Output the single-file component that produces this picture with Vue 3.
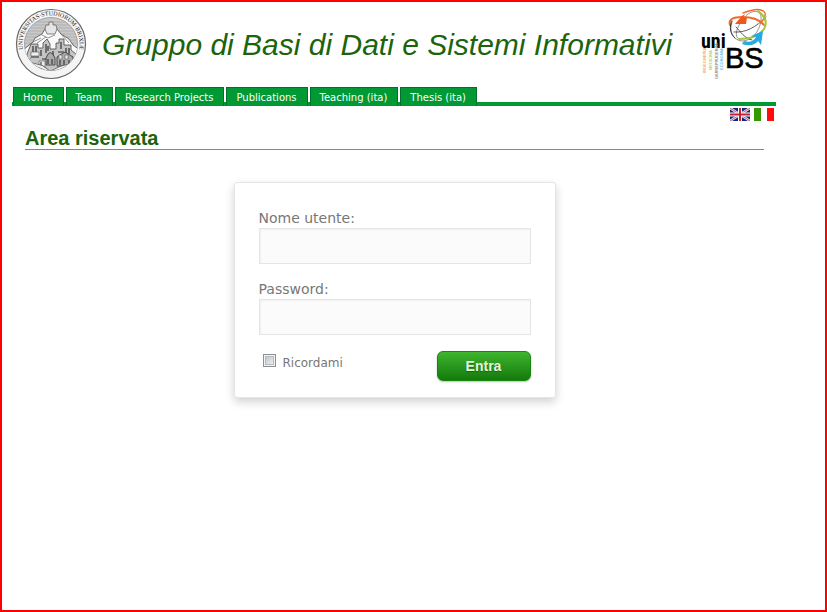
<script setup>
import { ref } from 'vue'

const tabs = ['Home', 'Team', 'Research Projects', 'Publications', 'Teaching (ita)', 'Thesis (ita)']
const username = ref('')
const password = ref('')
const remember = ref(false)
</script>

<template>
  <div class="page">
    <header class="banner">
      <svg class="seal" viewBox="0 0 72 72" role="img" aria-label="Universitas Studiorum Brixiae">
        <defs>
          <path id="seal-arc" d="M14 54A28.500 28.500 0 1 1 58 54" />
          <clipPath id="seal-inner"><circle cx="36" cy="36" r="26.500" /></clipPath>
        </defs>
        <circle cx="36" cy="36" r="34.500" fill="#f4f4f4" stroke="#666" stroke-width="1.200" />
        <circle cx="36" cy="36" r="26.500" fill="#c9c9c9" stroke="#888" stroke-width=".7" />
        <g clip-path="url(#seal-inner)">
          <path d="M8 14H64M8 17H64M8 20H64M8 23H64M8 26H64M8 29H64M8 32H64M8 35H64" stroke="#aaa" stroke-width=".8" />
          <path d="M6 44L14 37L18 34L20 30L27 26L30 21H42L46 26L54 31L58 37L66 43V50H6Z" fill="#fafafa" stroke="#666" />
          <path d="M30 21L31 17H34V14H38V17H41L42 21L40 26H32Z" fill="#e5e5e5" stroke="#666" stroke-width=".8" />
          <path d="M18 34L26 30M22 35L31 29M46 26L54 35M27 27L33 30L40 27" fill="none" stroke="#777" stroke-width=".8" />
          <path d="M12 46L16 36H23V40H28V35L32 31L35 36V41H41V35H44V31H49V37H56V42L61 46L58 58L36 66L12 56Z" fill="#c4c4c4" stroke="#444" stroke-width=".8" />
          <path d="M18 38v7M21 38v7M26 42v6M31 36v9M33 38v5M38 43v5M46 34v7M51 40v7M54 40v6M16 49h8M27 51h6M43 44h6M52 49h6" stroke="#333" stroke-width="1.200" />
          <path d="M31 50Q35 39 40 50V57H31ZM42 49l8-5 8 5v9H42Z" fill="#aaa" stroke="#333" stroke-width=".8" />
          <path d="M24 53h6v6h-6zM16 44h8v4h-8zM44 47h3v4h-3zM50 47h3v4h-3z" fill="#eee" stroke="#555" stroke-width=".6" />
          <path d="M33 51v5M37 51v5M45 52v5M49 52v5M54 52v5M26 54v4" stroke="#222" />
          <path d="M14 49L12 55L27 59L35 65L45 60L59 56L62 48" fill="none" stroke="#555" stroke-width="3.600" />
          <path d="M14 49L12 55L27 59L35 65L45 60L59 56L62 48" fill="none" stroke="#eee" stroke-width="2.400" />
        </g>
        <text class="seal-text"><textPath href="#seal-arc" startOffset="50%" text-anchor="middle">UNIVERSITAS·STUDIORUM·BRIXIÆ</textPath></text>
      </svg>
      <h1 class="title">Gruppo di Basi di Dati e Sistemi Informativi</h1>
      <svg class="unibs" viewBox="0 0 68 72" role="img" aria-label="uniBS">
        <g fill="none" stroke-linecap="round">
          <path d="M31 14C28 23 31 32 41 33C53 33 61 19 60 8C58 1 49 2 42 11C35 20 33 29 38 31" stroke="#777" stroke-width=".8" />
          <path d="M33 24C45 25 55 19 65 9M35 19C40 24 43 30 51 32" stroke="#333" stroke-width=".8" />
          <path d="M29 17C27 11 33 9 41 9C51 9 59 12 63 17" stroke="#f26b2b" stroke-width="2" />
          <path d="M42 5C52 1 61 0 64 5C65 8 63 11 60 15" stroke="#f26b2b" stroke-width="1.400" />
          <path d="M57 3C64 8 67 14 63 21C58 28 48 31 38 31" stroke="#a5c838" stroke-width="2" />
          <path d="M31 13C28 18 29 26 34 30" stroke="#333" />
        </g>
        <path d="M34 16L41 8L44 6L42 10L46 9L45 16Z" fill="#f0561e" />
        <path d="M43 33C49 35 53 33 55 29L50 28L62 23L60 37L57 33C53 38 47 38 41 36Z" fill="#27a9e1" />
        <text x="0" y="40" class="uni">uni</text>
        <text x="24" y="60" class="bs">BS</text>
        <g class="faculties">
          <text transform="translate(5 65) rotate(-90)" fill="#f2a673">INGEGNERIA</text>
          <text transform="translate(11 62) rotate(-90)" fill="#b9cf60">MEDICINA</text>
          <text transform="translate(17 71) rotate(-90)" fill="#888">GIURISPRUDENZA</text>
          <text transform="translate(22 62) rotate(-90)" fill="#65bfe5">ECONOMIA</text>
        </g>
      </svg>
    </header>

    <nav class="tabs" aria-label="Menu">
      <a v-for="tab in tabs" :key="tab" href="#" class="tab">{{ tab }}</a>
    </nav>

    <div class="languages">
      <a href="#" aria-label="English">
        <svg class="flag" viewBox="0 0 20 13">
          <path d="M0 0H20V13H0Z" fill="#14267c" />
          <path d="M0 0L20 13M20 0L0 13" stroke="#dfe6f5" stroke-width="2.400" />
          <path d="M0 0L20 13M20 0L0 13" stroke="#d33a4a" stroke-width=".8" />
          <path d="M10 0V13M0 6.500H20" stroke="#fff" stroke-width="4" />
          <path d="M10 0V13M0 6.500H20" stroke="#c8202f" stroke-width="2" />
        </svg>
      </a>
      <a href="#" aria-label="Italiano">
        <svg class="flag" viewBox="0 0 20 13">
          <path d="M0 0H20V13H0Z" fill="#fff" />
          <path d="M0 0H7V13H0Z" fill="#339900" />
          <path d="M13 0H20V13H13Z" fill="#ff0c0c" />
        </svg>
      </a>
    </div>

    <main class="content">
      <h2 class="heading">Area riservata</h2>
      <form class="card" @submit.prevent>
        <label class="label" for="username">Nome utente:</label>
        <input id="username" v-model="username" class="field" type="text" />
        <label class="label" for="password">Password:</label>
        <input id="password" v-model="password" class="field" type="password" />
        <div class="actions">
          <div class="remember">
            <input id="remember" v-model="remember" class="check" type="checkbox" />
            <label for="remember">Ricordami</label>
          </div>
          <button class="submit" type="submit">Entra</button>
        </div>
      </form>
    </main>
  </div>
</template>

<style>
body {
  background: #fff;
}
</style>

<style scoped>
.page {
  box-sizing: border-box;
  min-height: 100vh;
  padding: 6px 49px 24px 10px;
  border: 2px solid #f00;
  font-family: Verdana, "DejaVu Sans", sans-serif;
}
.banner {
  display: flex;
  align-items: center;
  height: 72px;
  padding: 0 7px 0 3px;
}
.seal {
  flex: none;
  width: 72px;
  height: 72px;
}
.seal-text {
  font: 400 6px "Liberation Serif", serif;
  fill: #222;
}
.title {
  flex: 1;
  margin: 0 0 0 15px;
  padding-top: 2px;
  color: #1c640c;
  font: italic 400 30px/38px "Liberation Sans", Arial, sans-serif;
  white-space: nowrap;
}
.unibs {
  flex: none;
  width: 68px;
  height: 72px;
}
.uni {
  font: 700 20px "Liberation Sans Narrow", "Roboto Condensed", "Open Sans Condensed", "Liberation Sans", sans-serif;
}
.bs {
  font: 400 29px "Liberation Sans", sans-serif;
  stroke: #000;
  stroke-width: .6px;
}
.faculties {
  font: 700 4px "Liberation Sans", sans-serif;
}
.tabs {
  display: flex;
  gap: 2px;
  margin-top: 7px;
  padding-left: 1px;
  background: linear-gradient(#093, #093) bottom / 100% 4px no-repeat;
}
.tab {
  box-sizing: border-box;
  height: 19px;
  padding: 0 10px 0 9px;
  border: 1px solid #00702a;
  border-bottom: 0;
  background: #093;
  color: #fff;
  font-size: 10px;
  line-height: 20px;
  text-decoration: none;
  white-space: nowrap;
}
.languages {
  display: flex;
  justify-content: flex-end;
  gap: 4px;
  padding: 2px 2px 0 0;
}
.flag {
  display: block;
  width: 20px;
  height: 13px;
}
.content {
  padding: 6px 12px 0 13px;
}
.heading {
  margin: 0 0 32px;
  border-bottom: 1px solid #ec6a17;
  color: #1c640c;
  font: 700 20px/22px "Liberation Sans", Arial, sans-serif;
}
.card {
  box-sizing: border-box;
  width: 322px;
  max-width: 100%;
  margin: 0 auto;
  padding: 25px 24px 16px;
  border: 1px solid #e5e5e5;
  border-radius: 3px;
  background: #fff;
  box-shadow: 0 4px 10px rgba(0, 0, 0, .18);
  color: #777;
}
.label {
  display: block;
  font-size: 14px;
  line-height: 20px;
}
.field {
  display: block;
  box-sizing: border-box;
  width: 100%;
  height: 36px;
  margin: 0 0 15px;
  padding: 3px 6px;
  border: 1px solid #e5e5e5;
  background: #fbfbfb;
  box-shadow: inset 1px 1px 2px rgba(200, 200, 200, .2);
  color: #555;
  font-size: 20px;
}
.actions {
  display: flex;
  align-items: flex-start;
  justify-content: space-between;
  padding-top: 1px;
}
.remember {
  display: flex;
  align-items: center;
  gap: 7px;
  padding-left: 4px;
  font-size: 12px;
  line-height: 24px;
}
.check {
  appearance: none;
  width: 13px;
  height: 13px;
  margin: 0 0 6px;
  border: 1px solid #8e8f8f;
  background: linear-gradient(135deg, #b8bcc4, #f8f8f8);
  box-shadow: inset 0 0 0 1px #f4f4f4, inset 0 0 0 2px #b6bac0;
}
.check:checked {
  background: #4a4;
}
.submit {
  width: 94px;
  height: 30px;
  padding: 0;
  border: 1px solid #18850f;
  border-radius: 6px;
  background: linear-gradient(#3fb52f, #147a0c);
  box-shadow: 0 1px 2px rgba(0, 0, 0, .25);
  color: #e3f5dc;
  font: 700 14px/28px "Liberation Sans", Arial, sans-serif;
  text-shadow: 0 1px 1px rgba(0, 0, 0, .3);
}
</style>
